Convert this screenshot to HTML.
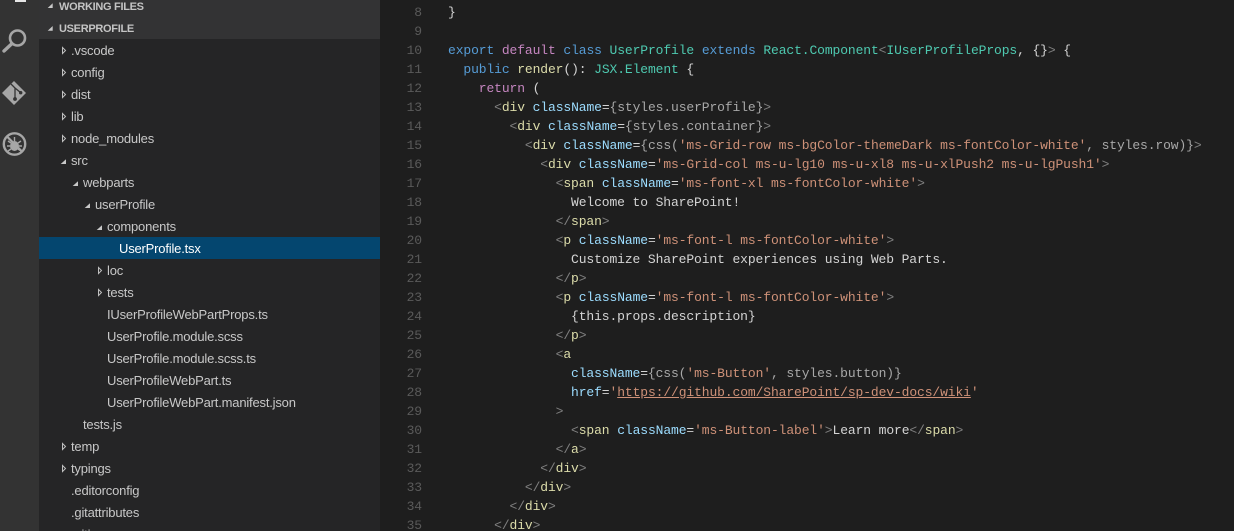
<!DOCTYPE html>
<html><head><meta charset="utf-8">
<style>
html,body{margin:0;padding:0;background:#1e1e1e;}
#r{position:relative;width:1234px;height:531px;overflow:hidden;background:#1e1e1e;}
#ab{position:absolute;left:0;top:0;width:39px;height:531px;background:#333333;}
#sb{position:absolute;left:39px;top:0;width:341px;height:531px;background:#252526;}
.h{position:absolute;left:0;width:341px;height:22px;background:#333334;font:bold 11px/22px "Liberation Sans",sans-serif;color:#c4c4c4;letter-spacing:-.3px;}
.h span{position:absolute;left:20px;top:1px;white-space:nowrap;}
.t{position:absolute;height:22px;margin-top:1px;font:13px/22px "Liberation Sans",sans-serif;letter-spacing:-.19px;color:#c8c8c8;white-space:nowrap;}
.sel{position:absolute;left:39px;top:237px;width:341px;height:22px;background:#04466f;}
svg{position:absolute;left:0;top:0;}
#ln{position:absolute;left:380px;top:3px;width:42px;text-align:right;margin:0;font:13px/19px "Liberation Mono",monospace;letter-spacing:-.1px;color:#5a5a5a;}
#c{position:absolute;left:448px;top:3px;margin:0;font:13px/19px "Liberation Mono",monospace;letter-spacing:-.113px;color:#d4d4d4;white-space:pre;}
.k{color:#569cd6}.p{color:#c586c0}.y{color:#4ec9b0}.f{color:#dcdcaa}.g{color:#808080}.a{color:#9cdcfe}.s{color:#ce9178}.d{color:#a8a8a8}.u{color:#ce9178;text-decoration:underline}.i{color:#d7ba7d}
</style></head><body><div id="r">
<div id="ab"></div>
<div id="sb">
<div class="h" style="top:-5px"><span>WORKING FILES</span></div>
<div class="h" style="top:17px"><span>USERPROFILE</span></div>
</div>
<div class="sel"></div>
<svg width="380" height="531" viewBox="0 0 380 531">
<rect x="15" y="0" width="11" height="2" fill="#e6e6e6"/>
<circle cx="17.5" cy="38" r="7.5" fill="none" stroke="#a6a6a6" stroke-width="2.6"/>
<path d="M11.5 44 L4 51" stroke="#a6a6a6" stroke-width="3.4" stroke-linecap="round"/>
<path d="M14 81 L26 93 L14 105 L2 93Z" fill="#a6a6a6"/>
<path d="M11 84 L15 88 L15 99 M15 88 L20.5 92.5" stroke="#333" stroke-width="1.3" fill="none"/>
<circle cx="15" cy="99" r="1.9" fill="#333"/><circle cx="20.7" cy="92.7" r="1.7" fill="#333"/>
<circle cx="14.5" cy="144" r="10.7" fill="none" stroke="#a6a6a6" stroke-width="2.4"/>
<path d="M7 136.5 L22 151.5" stroke="#a6a6a6" stroke-width="2.2"/>
<ellipse cx="14.5" cy="146" rx="4.5" ry="5" fill="#a6a6a6"/>
<path d="M8 141 L11 143 M21 141 L18 143 M7 146 L10 146 M22 146 L19 146 M8 151 L11 149 M21 151 L18 149 M14.5 137 L14.5 141" stroke="#a6a6a6" stroke-width="1.4"/>
<g fill="#c8c8c8"><path d="M52.7 3.3 L52.7 8 L47.7 8Z"/><path d="M52.7 26 L52.7 30.7 L47.7 30.7Z"/></g>
<g fill="none" stroke="#c0c0c0" stroke-width="1">
<path d="M62.5 47.5 L65.5 50.5 L62.5 53.5Z"/><path d="M62.5 69.5 L65.5 72.5 L62.5 75.5Z"/><path d="M62.5 91.5 L65.5 94.5 L62.5 97.5Z"/><path d="M62.5 113.5 L65.5 116.5 L62.5 119.5Z"/><path d="M62.5 135.5 L65.5 138.5 L62.5 141.5Z"/>
<path d="M98.5 267.5 L101.5 270.5 L98.5 273.5Z"/><path d="M98.5 289.5 L101.5 292.5 L98.5 295.5Z"/>
<path d="M62.5 443.5 L65.5 446.5 L62.5 449.5Z"/><path d="M62.5 465.5 L65.5 468.5 L62.5 471.5Z"/>
</g>
<g fill="#c8c8c8"><path d="M66 159.3 L66 164 L60.7 164Z"/><path d="M78 181.3 L78 186 L72.7 186Z"/><path d="M90 203.3 L90 208 L84.7 208Z"/><path d="M102 225.3 L102 230 L96.7 230Z"/></g>
<g fill="#9a9a9a"><rect x="463" y="0" width="2" height="1"/><rect x="696" y="0" width="2" height="1"/><rect x="948" y="0" width="2" height="1"/><rect x="976" y="0" width="2" height="1"/></g>
</svg>
<div class="t" style="left:71px;top:39px">.vscode</div>
<div class="t" style="left:71px;top:61px">config</div>
<div class="t" style="left:71px;top:83px">dist</div>
<div class="t" style="left:71px;top:105px">lib</div>
<div class="t" style="left:71px;top:127px">node_modules</div>
<div class="t" style="left:71px;top:149px">src</div>
<div class="t" style="left:83px;top:171px">webparts</div>
<div class="t" style="left:95px;top:193px">userProfile</div>
<div class="t" style="left:107px;top:215px">components</div>
<div class="t" style="left:119px;top:237px;color:#fff">UserProfile.tsx</div>
<div class="t" style="left:107px;top:259px">loc</div>
<div class="t" style="left:107px;top:281px">tests</div>
<div class="t" style="left:107px;top:303px">IUserProfileWebPartProps.ts</div>
<div class="t" style="left:107px;top:325px">UserProfile.module.scss</div>
<div class="t" style="left:107px;top:347px">UserProfile.module.scss.ts</div>
<div class="t" style="left:107px;top:369px">UserProfileWebPart.ts</div>
<div class="t" style="left:107px;top:391px">UserProfileWebPart.manifest.json</div>
<div class="t" style="left:83px;top:413px">tests.js</div>
<div class="t" style="left:71px;top:435px">temp</div>
<div class="t" style="left:71px;top:457px">typings</div>
<div class="t" style="left:71px;top:479px">.editorconfig</div>
<div class="t" style="left:71px;top:501px">.gitattributes</div>
<div class="t" style="left:71px;top:523px">.gitignore</div>
<pre id="ln">8
9
10
11
12
13
14
15
16
17
18
19
20
21
22
23
24
25
26
27
28
29
30
31
32
33
34
35</pre>
<pre id="c">}

<span class="k">export</span> <span class="p">default</span> <span class="k">class</span> <span class="y">UserProfile</span> <span class="k">extends</span> <span class="y">React.Component</span><span class="g">&lt;</span><span class="y">IUserProfileProps</span>, {}<span class="g">&gt;</span> {
  <span class="k">public</span> <span class="f">render</span>(): <span class="y">JSX.Element</span> {
    <span class="p">return</span> (
      <span class="g">&lt;</span><span class="f">div</span> <span class="a">className</span>=<span class="d">{styles.userProfile}</span><span class="g">&gt;</span>
        <span class="g">&lt;</span><span class="f">div</span> <span class="a">className</span>=<span class="d">{styles.container}</span><span class="g">&gt;</span>
          <span class="g">&lt;</span><span class="f">div</span> <span class="a">className</span>=<span class="d">{css(</span><span class="s">'ms-Grid-row ms-bgColor-themeDark ms-fontColor-white'</span><span class="d">, styles.row)}</span><span class="g">&gt;</span>
            <span class="g">&lt;</span><span class="f">div</span> <span class="a">className</span>=<span class="s">'ms-Grid-col ms-u-lg10 ms-u-xl8 ms-u-xlPush2 ms-u-lgPush1'</span><span class="g">&gt;</span>
              <span class="g">&lt;</span><span class="f">span</span> <span class="a">className</span>=<span class="s">'ms-font-xl ms-fontColor-white'</span><span class="g">&gt;</span>
                Welcome to SharePoint!
              <span class="g">&lt;/</span><span class="f">span</span><span class="g">&gt;</span>
              <span class="g">&lt;</span><span class="f">p</span> <span class="a">className</span>=<span class="s">'ms-font-l ms-fontColor-white'</span><span class="g">&gt;</span>
                Customize SharePoint experiences using Web Parts.
              <span class="g">&lt;/</span><span class="f">p</span><span class="g">&gt;</span>
              <span class="g">&lt;</span><span class="f">p</span> <span class="a">className</span>=<span class="s">'ms-font-l ms-fontColor-white'</span><span class="g">&gt;</span>
                {this.props.description}
              <span class="g">&lt;/</span><span class="f">p</span><span class="g">&gt;</span>
              <span class="g">&lt;</span><span class="f">a</span>
                <span class="a">className</span>=<span class="d">{css(</span><span class="s">'ms-Button'</span><span class="d">, styles.button)}</span>
                <span class="a">href</span>=<span class="s">'</span><span class="u">https://github.com/SharePoint/sp-dev-docs/wiki</span><span class="s">'</span>
              <span class="g">&gt;</span>
                <span class="g">&lt;</span><span class="f">span</span> <span class="a">className</span>=<span class="s">'ms-Button-label'</span><span class="g">&gt;</span>Learn more<span class="g">&lt;/</span><span class="f">span</span><span class="g">&gt;</span>
              <span class="g">&lt;/</span><span class="f">a</span><span class="g">&gt;</span>
            <span class="g">&lt;/</span><span class="f">div</span><span class="g">&gt;</span>
          <span class="g">&lt;/</span><span class="f">div</span><span class="g">&gt;</span>
        <span class="g">&lt;/</span><span class="f">div</span><span class="g">&gt;</span>
      <span class="g">&lt;/</span><span class="f">div</span><span class="g">&gt;</span></pre>
</div></body></html>
